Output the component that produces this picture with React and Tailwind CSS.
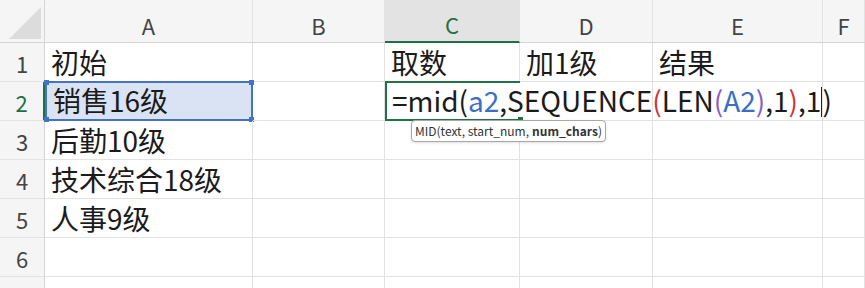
import React from 'react';

const cols = [
  { key: 'A', w: 'w-[208px]' },
  { key: 'B', w: 'w-[132px]' },
  { key: 'C', w: 'w-[135px]' },
  { key: 'D', w: 'w-[133px]' },
  { key: 'E', w: 'w-[170px]' },
  { key: 'F', w: 'flex-1' },
];

const data = {
  1: { A: '初始', C: '取数', D: '加1级', E: '结果' },
  2: { A: '销售16级' },
  3: { A: '后勤10级' },
  4: { A: '技术综合18级' },
  5: { A: '人事9级' },
  6: {},
  7: {},
};

const font = { fontFamily: '"Noto Sans CJK SC", "Noto Sans", sans-serif' };

function Formula() {
  return (
    <span className="whitespace-nowrap">
      =mid(<span className="text-[#3a6fc4]">a2</span>,SEQUENCE<span className="text-[#d13438]">(</span>LEN
      <span className="text-[#8a5cc8]">(</span>
      <span className="text-[#3a6fc4]">A2</span>
      <span className="text-[#8a5cc8]">)</span>,1<span className="text-[#d13438]">)</span>,1
      <span className="inline-block w-[1px] h-[30px] bg-[#222] align-middle -mt-1"></span>)
    </span>
  );
}

export default function App() {
  return (
    <div className="w-[865px] h-[288px] overflow-hidden bg-white select-none" style={font}>
      {/* column headers */}
      <div className="flex h-[43px] bg-[#f5f5f5] border-b border-[#d4d4d4]">
        <div className="w-[45px] flex items-end justify-end p-[3px] border-r border-[#d4d4d4]">
          <div className="w-0 h-0 border-l-[32px] border-l-transparent border-b-[32px] border-b-[#dcdcdc]"></div>
        </div>
        {cols.map((c) => (
          <div
            key={c.key}
            className={`${c.w} flex items-end justify-center pb-[2px] text-[22px] leading-[30px] border-r border-[#e2e2e2] ${
              c.key === 'C'
                ? 'bg-[#e3e3e3] text-[#1e7145] border-b-2 border-b-[#1e7145] -mb-[1px]'
                : 'text-[#444]'
            }`}
          >
            {c.key}
          </div>
        ))}
      </div>

      {Object.entries(data).map(([r, row]) => (
        <div key={r} className="flex h-[39px]">
          <div
            className={`w-[45px] flex items-end justify-center pb-[1px] text-[22px] leading-[34px] bg-[#f5f5f5] border-b border-[#e2e2e2] ${
              r === '2' ? 'text-[#1e7145] border-r-2 border-r-[#1e7145]' : 'text-[#444] border-r border-r-[#d4d4d4]'
            }`}
          >
            {r}
          </div>
          {cols.map((c) => {
            const selected = r === '2' && c.key === 'A';
            const editing = r === '2' && c.key === 'C';
            return (
              <div
                key={c.key}
                className={`${c.w} relative flex items-end px-[6px] text-[28px] leading-[38px] text-[#1b1b1b] whitespace-nowrap ${
                  selected
                    ? 'bg-[#dae3f3] border-2 border-[#4472c4] -mt-[1px]'
                    : editing
                    ? 'z-20 border-2 border-[#217346] -mt-[1px] border-r-0 pl-[5px]'
                    : 'border-r border-b border-[#e2e2e2]'
                }`}
              >
                {selected && (
                  <>
                    <span className="absolute -left-[3px] -top-[3px] w-[5px] h-[5px] bg-[#4472c4]"></span>
                    <span className="absolute -right-[3px] -top-[3px] w-[5px] h-[5px] bg-[#4472c4]"></span>
                    <span className="absolute -left-[3px] -bottom-[3px] w-[5px] h-[5px] bg-[#4472c4]"></span>
                    <span className="absolute -right-[3px] -bottom-[3px] w-[5px] h-[5px] bg-[#4472c4]"></span>
                  </>
                )}
                {editing && (
                  <>
                    <span className="absolute -right-[3px] -bottom-[3px] w-[5px] h-[5px] bg-[#217346]"></span>
                    <Formula />
                    <div className="absolute left-[24px] top-[37px] z-30 flex items-center h-[22px] px-[3px] bg-white border border-[#a8a8a8] rounded-[4px] shadow-sm text-[12px] leading-none text-[#333] whitespace-nowrap">
                      MID(text, start_num, <b className="ml-[3px] font-bold">num_chars</b>)
                    </div>
                  </>
                )}
                {!editing && row[c.key]}
              </div>
            );
          })}
        </div>
      ))}
    </div>
  );
}
